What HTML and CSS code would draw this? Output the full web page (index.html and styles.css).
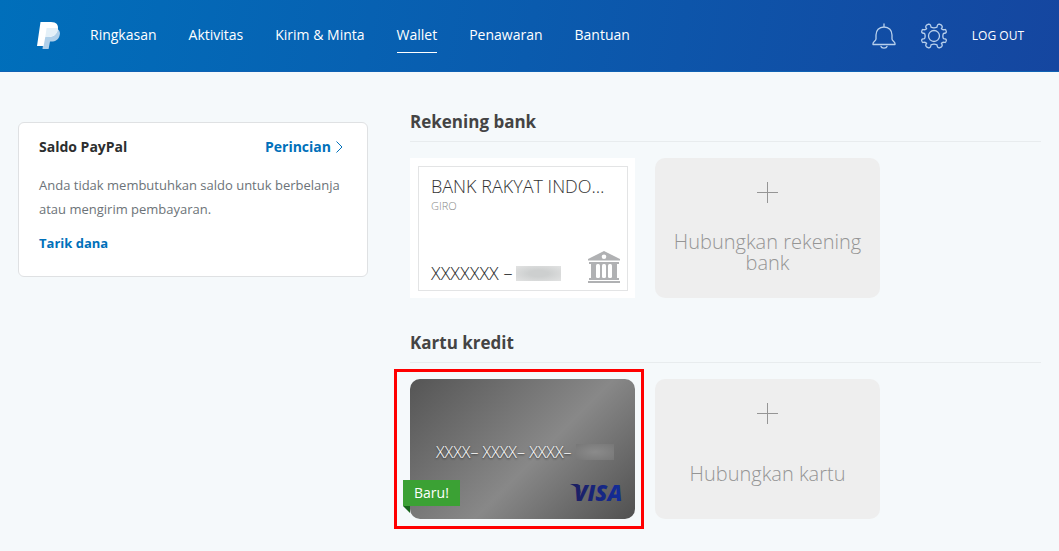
FILE: index.html
```html
<!DOCTYPE html>
<html lang="id">
<head>
<meta charset="utf-8">
<meta name="viewport" content="width=device-width, initial-scale=1">
<title>PayPal: Wallet</title>
<link rel="stylesheet" href="styles.css">
</head>
<body>
<header class="header">
  <a class="logo" href="#" aria-label="PayPal">
    <svg width="24" height="28" viewBox="0 0 24 28" aria-hidden="true">
      <path fill="#b0d0ea" d="M8 7H20.500C23 8.500 23.400 11 22.600 13.500 21.500 17.500 18.500 19.500 14.500 19.500H13L11.600 27H5.500Z"/>
      <path fill="#fff" d="M3.500 0H14C19.500 0 21.800 3 20.800 7.500 19.800 12.500 16.500 15 11.500 15H8.300L6.600 24H0Z"/>
      <path fill="#e4f0f8" d="M9.600 6H20.900C20.800 11.500 17 15 11.500 15H8.300Z"/>
    </svg>
  </a>
  <nav class="nav" aria-label="Utama">
    <a class="nav-link" href="#">Ringkasan</a>
    <a class="nav-link" href="#">Aktivitas</a>
    <a class="nav-link" href="#">Kirim &amp; Minta</a>
    <a class="nav-link nav-link-active" href="#" aria-current="page">Wallet</a>
    <a class="nav-link" href="#">Penawaran</a>
    <a class="nav-link" href="#">Bantuan</a>
  </nav>
  <div class="tools">
    <button class="icon-button" type="button" aria-label="Notifikasi">
      <svg width="24" height="26" viewBox="0 0 24 26" fill="none" stroke="#b8d0ec" stroke-width="1.300" stroke-linecap="round" stroke-linejoin="round" aria-hidden="true">
        <path d="M12 1V4M12 4C7 4 4 7.500 4 12V16C4 18 1 18.500 1 20.500V21.500H23V20.500C23 18.500 20 18 20 16V12C20 7.500 17 4 12 4M9 23.500C9.500 25.600 14.500 25.600 15 23.500"/>
      </svg>
    </button>
    <button class="icon-button" type="button" aria-label="Pengaturan">
      <svg width="26" height="26" viewBox="0 0 26 26" fill="none" stroke="#b8d0ec" stroke-width="1.300" stroke-linejoin="round" aria-hidden="true">
        <path d="M10 4.200Q9.800 1 7.600 1.200L5.500 2.200Q4 3.500 5.600 5.700Q3.600 7.300 1.800 6.500Q1 6.600 .7 8.500Q.4 10.300 3.600 10.400Q4.700 13 3.600 15.600Q.4 15.700 .7 17.500Q1 19.400 1.800 19.500Q3.600 18.700 5.600 20.300Q4 22.500 5.500 23.800L7.600 24.800Q9.800 25 10 21.800Q13 20.500 16 21.800Q16.200 25 18.400 24.800L20.500 23.800Q22 22.500 20.400 20.300Q22.400 18.700 24.200 19.500Q25 19.400 25.300 17.500Q25.600 15.700 22.400 15.600Q21.300 13 22.400 10.400Q25.600 10.300 25.300 8.500Q25 6.600 24.200 6.500Q22.400 7.300 20.400 5.700Q22 3.500 20.500 2.200L18.400 1.200Q16.200 1 16 4.200Q13 5.500 10 4.200Z"/>
        <circle cx="13" cy="13" r="5.500"/>
      </svg>
    </button>
    <a class="logout" href="#">LOG OUT</a>
  </div>
</header>

<main class="page">
  <aside class="balance">
    <div class="balance-head">
      <h2 class="balance-title">Saldo PayPal</h2>
      <a class="details" href="#">Perincian
        <svg width="7" height="12" viewBox="0 0 7 12" fill="none" stroke="currentColor" aria-hidden="true"><path d="M.5 .5 6 6 .5 11.500"/></svg>
      </a>
    </div>
    <p class="balance-text">Anda tidak membutuhkan saldo untuk berbelanja atau mengirim pembayaran.</p>
    <a class="withdraw" href="#">Tarik dana</a>
  </aside>

  <div class="wallet">
    <section class="group">
      <h2 class="group-title">Rekening bank</h2>
      <div class="cards">
        <article class="card bank">
          <div class="bank-inner">
            <h3 class="bank-name">BANK RAKYAT INDO…</h3>
            <p class="bank-type">GIRO</p>
            <div class="bank-foot">
              <span class="bank-number">XXXXXXX –<span class="redacted"></span></span>
              <svg class="bank-icon" width="32" height="32" viewBox="0 0 32 32" fill="#b0b1b3" aria-hidden="true">
                <path fill-rule="evenodd" d="M0 9.500V8L16 0 32 8V9.500ZM16 3.500A2.300 2.300 0 1 0 16 8.100 2.300 2.300 0 1 0 16 3.500Z"/>
                <path d="M1 11H31V13H29V27H31V29H1V27H3V13H1ZM0 30H32V32H0Z"/>
                <g fill="#fff"><rect x="8" y="13" width="4" height="14" rx="1.500"/><rect x="14" y="13" width="4" height="14" rx="1.500"/><rect x="20" y="13" width="4" height="14" rx="1.500"/></g>
              </svg>
            </div>
          </div>
        </article>
        <button class="card add" type="button">
          <svg width="21" height="21" viewBox="0 0 21 21" stroke="#959595" aria-hidden="true"><path d="M10.500 0V21M0 10.500H21"/></svg>
          <span class="add-label">Hubungkan rekening bank</span>
        </button>
      </div>
    </section>

    <section class="group">
      <h2 class="group-title">Kartu kredit</h2>
      <div class="cards">
        <article class="card credit">
          <p class="credit-number">XXXX– XXXX– XXXX–<span class="redacted redacted-dark"></span></p>
          <svg class="visa" width="60" height="26" viewBox="0 0 60 26" role="img" aria-label="Visa">
            <defs><linearGradient id="visa-ink"><stop offset="0" stop-color="#1c1f62"/><stop offset="1" stop-color="#122d9c"/></linearGradient></defs>
            <path fill="#1c1f62" d="M0 4H7Q9 4 9.500 6L11 14Q8 7 0 4Z"/>
            <text class="visa-text" x="4" y="21" fill="url(#visa-ink)">VISA</text>
          </svg>
          <span class="ribbon">Baru!</span>
          <span class="highlight"></span>
        </article>
        <button class="card add" type="button">
          <svg width="21" height="21" viewBox="0 0 21 21" stroke="#959595" aria-hidden="true"><path d="M10.500 0V21M0 10.500H21"/></svg>
          <span class="add-label">Hubungkan kartu</span>
        </button>
      </div>
    </section>
  </div>
</main>
</body>
</html>
```

FILE: styles.css
```css
* { box-sizing: border-box; }
body {
  margin: 0;
  min-height: 100vh;
  background: #f5f9fb;
  color: #2c2e2f;
  font-family: "Open Sans", "Noto Sans", sans-serif;
  font-size: 14px;
}
h2, h3, p { margin: 0; }
a { color: #0070ba; text-decoration: none; }
button { font: inherit; cursor: pointer; }
svg { display: block; flex: none; }

.header {
  display: flex;
  align-items: center;
  height: 72px;
  padding: 0 35px 0 37px;
  border-bottom: 1px solid #0f62b4;
  background: linear-gradient(100deg, #006fbb 0%, #0a5bae 50%, #1546a0 100%);
}
.logo { margin-right: 29px; }
.nav { display: flex; flex: 1; gap: 32px; }
.nav-link {
  padding: 8px 0;
  border-bottom: 1px solid transparent;
  color: #fff;
  font-size: 14px;
  line-height: 18px;
}
.nav-link-active { border-bottom-color: #fff; }
.tools { display: flex; align-items: center; gap: 25px; }
.icon-button { padding: 0; border: 0; background: none; }
.logout { color: #fff; font-size: 12px; }

.page {
  display: flex;
  align-items: flex-start;
  gap: 42px;
  padding: 38px 18px 32px;
}
.balance {
  flex: 0 0 350px;
  margin-top: 12px;
  padding: 12px 24px 21px 20px;
  border: 1px solid #dfe1e3;
  border-radius: 6px;
  background: #fff;
}
.balance-head { display: flex; justify-content: space-between; line-height: 24px; }
.balance-title { font-size: 14px; font-weight: 700; }
.details { display: flex; align-items: center; gap: 5px; font-weight: 700; }
.balance-text {
  margin: 14px 0 10px;
  color: #6c7378;
  font-size: 13px;
  line-height: 24px;
}
.withdraw { display: inline-block; font-size: 13px; font-weight: 700; line-height: 24px; }

.wallet { display: grid; flex: 1; gap: 33px; }
.group-title {
  padding-bottom: 7px;
  border-bottom: 1px solid #e8ecee;
  color: #444;
  font-size: 17px;
  font-weight: 700;
  line-height: 24px;
}
.cards { display: flex; flex-wrap: wrap; gap: 20px; padding-top: 16px; }
.card { position: relative; width: 225px; min-height: 140px; }
.bank { display: flex; padding: 8px 7px 7px 8px; background: #fff; }
.bank-inner {
  display: flex;
  flex: 1;
  flex-direction: column;
  min-width: 0;
  padding: 7px 7px 7px 12px;
  border: 1px solid #e3e4e5;
}
.bank-name {
  color: #333;
  font-size: 18px;
  font-weight: 300;
  line-height: 24px;
  white-space: nowrap;
}
.bank-type { color: #888; font-size: 11px; font-weight: 300; line-height: 16px; }
.bank-foot { display: flex; align-items: flex-end; justify-content: space-between; margin-top: auto; }
.bank-number { display: flex; align-items: center; font-size: 18px; font-weight: 300; line-height: 20px; }
.redacted {
  display: inline-block;
  width: 45px;
  height: 15px;
  margin-left: 4px;
  background: radial-gradient(ellipse, #cdcfcf 30%, #e2e3e3 100%);
}
.add {
  display: flex;
  flex-direction: column;
  align-items: center;
  gap: 28px;
  padding: 24px 16px;
  border: 0;
  border-radius: 10px;
  background: #eee;
}
.add-label {
  display: grid;
  place-items: center;
  min-height: 42px;
  color: #959595;
  font-size: 20px;
  font-weight: 300;
  line-height: 21px;
}

.credit {
  padding: 63px 20px 0 26px;
  border-radius: 10px;
  background: linear-gradient(135deg, #555 0%, #888 56%, #505050 100%);
}
.credit-number {
  display: flex;
  align-items: center;
  color: #fff;
  font-size: 16px;
  font-weight: 300;
  line-height: 20px;
  text-shadow: 0 1px 2px #333;
  white-space: nowrap;
}
.redacted-dark { width: 38px; height: 16px; background: radial-gradient(ellipse, #8b8b8b, #777); }
.visa { position: absolute; right: 5px; bottom: 13px; }
.visa-text { font: italic 800 22px "Open Sans", sans-serif; }
.ribbon {
  position: absolute;
  left: -7px;
  bottom: 13px;
  padding: 0 11px;
  background: #3ba134;
  color: #fff;
  font-size: 14px;
  line-height: 26px;
}
.ribbon::after {
  content: "";
  position: absolute;
  top: 100%;
  left: 0;
  border-top: 7px solid #17641b;
  border-left: 7px solid transparent;
}
.highlight {
  position: absolute;
  inset: -10px -9px -10px -16px;
  border: 3px solid #f00;
  pointer-events: none;
}
```
